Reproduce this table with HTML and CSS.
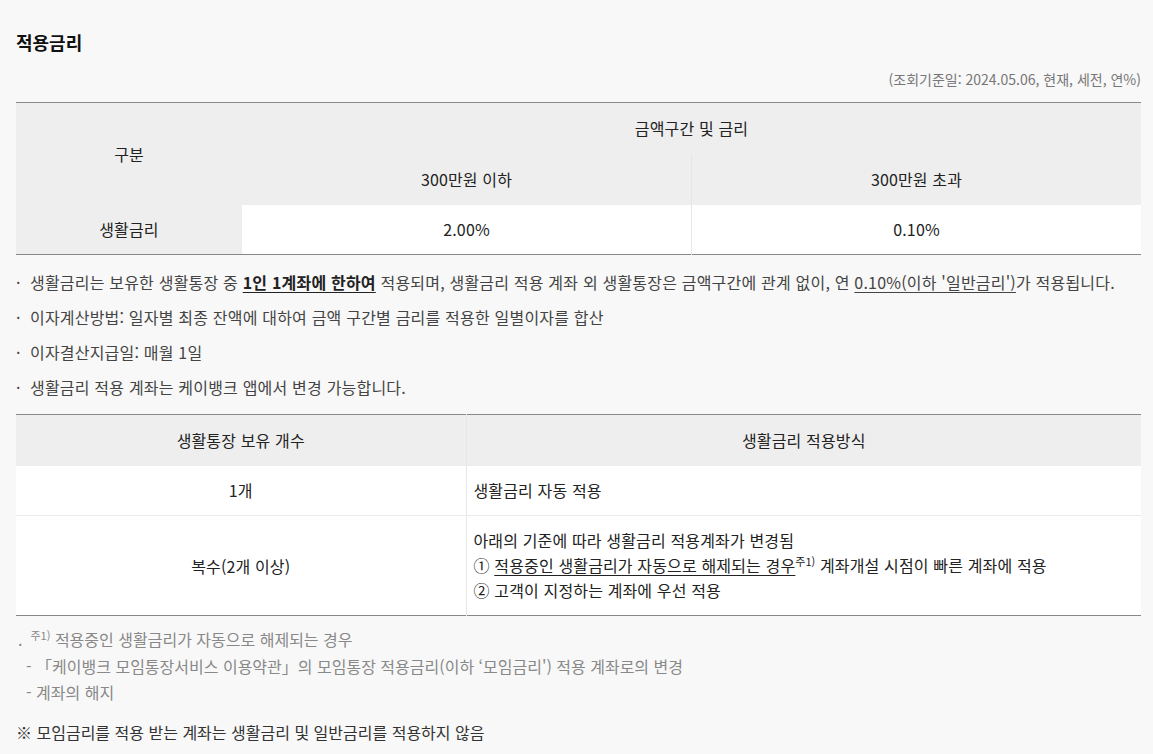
FILE: index.html
```html
<!DOCTYPE html>
<html lang="ko">
<head>
<meta charset="utf-8">
<title>적용금리</title>
<link rel="stylesheet" href="styles.css">
</head>
<body>
<div class="page">
  <h2 class="title">적용금리</h2>
  <p class="date">(조회기준일: 2024.05.06, 현재, 세전, 연%)</p>

  <table class="rate-table">
    <colgroup>
      <col class="c-label">
      <col class="c-half">
      <col class="c-half">
    </colgroup>
    <tr class="r-top">
      <th rowspan="2" class="th">구분</th>
      <th colspan="2" class="th">금액구간 및 금리</th>
    </tr>
    <tr class="r-mid">
      <th class="th">300만원 이하</th>
      <th class="th divl">300만원 초과</th>
    </tr>
    <tr class="r-data">
      <th class="th">생활금리</th>
      <td class="td">2.00%</td>
      <td class="td divl">0.10%</td>
    </tr>
  </table>

  <ul class="notes">
    <li>생활금리는 보유한 생활통장 중 <b class="u">1인 1계좌에 한하여</b> 적용되며, 생활금리 적용 계좌 외 생활통장은 금액구간에 관계 없이, 연 <span class="u">0.10%(이하 '일반금리')</span>가 적용됩니다.</li>
    <li>이자계산방법: 일자별 최종 잔액에 대하여 금액 구간별 금리를 적용한 일별이자를 합산</li>
    <li>이자결산지급일: 매월 1일</li>
    <li>생활금리 적용 계좌는 케이뱅크 앱에서 변경 가능합니다.</li>
  </ul>

  <table class="method-table">
    <colgroup>
      <col class="c-count">
      <col>
    </colgroup>
    <tr class="r-head">
      <th class="th">생활통장 보유 개수</th>
      <th class="th divl">생활금리 적용방식</th>
    </tr>
    <tr class="r-one">
      <td class="td">1개</td>
      <td class="td divl left">생활금리 자동 적용</td>
    </tr>
    <tr class="r-many">
      <td class="td">복수(2개 이상)</td>
      <td class="td divl left">
        <div class="line">아래의 기준에 따라 생활금리 적용계좌가 변경됨</div>
        <div class="line">① <span class="u">적용중인 생활금리가 자동으로 해제되는 경우</span><sup class="sup">주1)</sup> 계좌개설 시점이 빠른 계좌에 적용</div>
        <div class="line">② 고객이 지정하는 계좌에 우선 적용</div>
      </td>
    </tr>
  </table>

  <div class="foot">
    <div class="fline"><span class="dot">.</span><sup class="sup2">주1)</sup> 적용중인 생활금리가 자동으로 해제되는 경우</div>
    <div class="fline sub">- 「케이뱅크 모임통장서비스 이용약관」의 모임통장 적용금리(이하 ‘모임금리') 적용 계좌로의 변경</div>
    <div class="fline sub">- 계좌의 해지</div>
  </div>
  <p class="remark">※ 모임금리를 적용 받는 계좌는 생활금리 및 일반금리를 적용하지 않음</p>
</div>
</body>
</html>
```
FILE: styles.css
```css
* { box-sizing: border-box; }
html, body {
  margin: 0;
  padding: 0;
  background: #f8f8f8;
}
body {
  font-family: "Noto Sans CJK KR", "Noto Sans", sans-serif;
  color: #222;
  font-size: 16px;
}
.page {
  width: 1153px;
  padding: 30px 12px 0 16px;
}
.title {
  margin: 0;
  font-size: 18px;
  line-height: 24px;
  font-weight: 700;
  color: #111;
}
.date {
  margin: 15px 0 0;
  text-align: right;
  font-size: 14px;
  line-height: 20px;
  color: #777;
}
table {
  width: 100%;
  border-collapse: collapse;
  table-layout: fixed;
  letter-spacing: 0.15px;
}
.rate-table {
  margin-top: 13px;
  border-top: 1px solid #888;
  border-bottom: 1px solid #888;
}
.c-label { width: 226px; }
.th {
  background: #eeeeee;
  font-weight: 400;
  text-align: center;
  padding: 0;
  color: #222;
}
.td {
  background: #fff;
  text-align: center;
  padding: 0;
  color: #222;
}
.divl { border-left: 1px solid #e6e6e6; }
.r-top { height: 51px; }
.r-mid { height: 51px; }
.r-data { height: 50px; }

.notes {
  list-style: none;
  margin: 16px 0 0;
  padding: 0;
  display: flex;
  flex-direction: column;
  gap: 12px;
  color: #444;
  letter-spacing: 0.2px;
}
.notes li {
  line-height: 23px;
  padding-left: 14px;
  position: relative;
}
.notes li::before {
  content: "·";
  position: absolute;
  left: 0;
  top: 0;
}
.u { text-decoration: underline; text-underline-offset: 3px; }
b.u { font-weight: 700; color: #222; }

.method-table {
  margin-top: 15px;
  border-top: 1px solid #888;
  border-bottom: 1px solid #888;
}
.c-count { width: 450px; }
.r-head { height: 51px; }
.r-one { height: 50px; }
.r-one .td { border-bottom: 1px solid #ebebeb; }
.r-many { height: 100px; }
.left { text-align: left; padding-left: 7px; }
.line { line-height: 25px; }
.sup {
  font-size: 11px;
  vertical-align: 6px;
  line-height: 0;
  letter-spacing: 0;
}
.foot {
  margin-top: 10px;
  color: #888;
}
.fline { line-height: 26px; }
.fline:first-child { line-height: 27px; }
.fline.sub { padding-left: 10px; }
.dot { margin: 0 8px 0 2px; }
.sup2 {
  font-size: 11px;
  vertical-align: 6px;
  line-height: 0;
}
.remark {
  margin: 14px 0 0;
  line-height: 26px;
  color: #333;
}
```
